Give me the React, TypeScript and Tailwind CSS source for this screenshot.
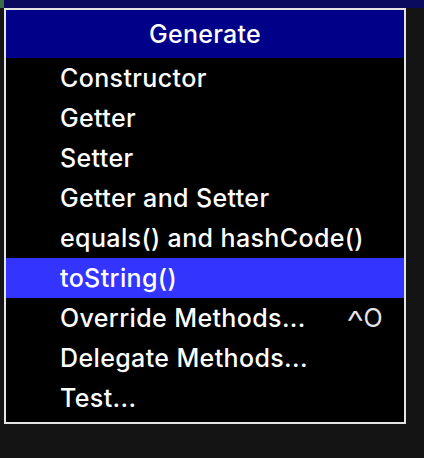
const items: { label: string; shortcut?: string; active?: boolean }[] = [
  { label: "Constructor" },
  { label: "Getter" },
  { label: "Setter" },
  { label: "Getter and Setter" },
  { label: "equals() and hashCode()" },
  { label: "toString()", active: true },
  { label: "Override Methods...", shortcut: "^O" },
  { label: "Delegate Methods..." },
  { label: "Test..." },
];

export default function App() {
  return (
    <div
      className="flex h-[458px] w-[424px] flex-col bg-[#141414] text-white"
      style={{ fontFamily: "Inter, 'Noto Sans', sans-serif" }}
    >
      <div className="flex h-[8px]">
        <div className="w-[4px] bg-[#3d6b47]" />
        <div className="flex-1 bg-[#0a0a5e]" />
      </div>

      <div className="ml-[4px] w-[402px] border-2 border-[#e4e4e4] bg-black pb-[4px]">
        <div className="flex h-[48px] items-center justify-center bg-[#000088] pt-[1px] text-[25px] font-medium tracking-[0.01em]">
          Generate
        </div>
        {items.map((item) => (
          <div
            key={item.label}
            className={
              item.active
                ? "flex h-[40px] items-center justify-between bg-[#3434ff] pl-[54px] pr-[21px] pt-[1px] text-[25px] font-medium tracking-[0.015em]"
                : "flex h-[40px] items-center justify-between pl-[54px] pr-[21px] pt-[1px] text-[25px] font-medium tracking-[0.015em]"
            }
          >
            <span>{item.label}</span>
            {item.shortcut && (
              <span className="flex items-center gap-[1px] font-normal text-[#e6e6e6]">
                <span className="inline-block translate-y-[4px] scale-x-125 text-[32px] font-light leading-none">
                  ^
                </span>
                <span>O</span>
              </span>
            )}
          </div>
        ))}
      </div>
    </div>
  );
}
